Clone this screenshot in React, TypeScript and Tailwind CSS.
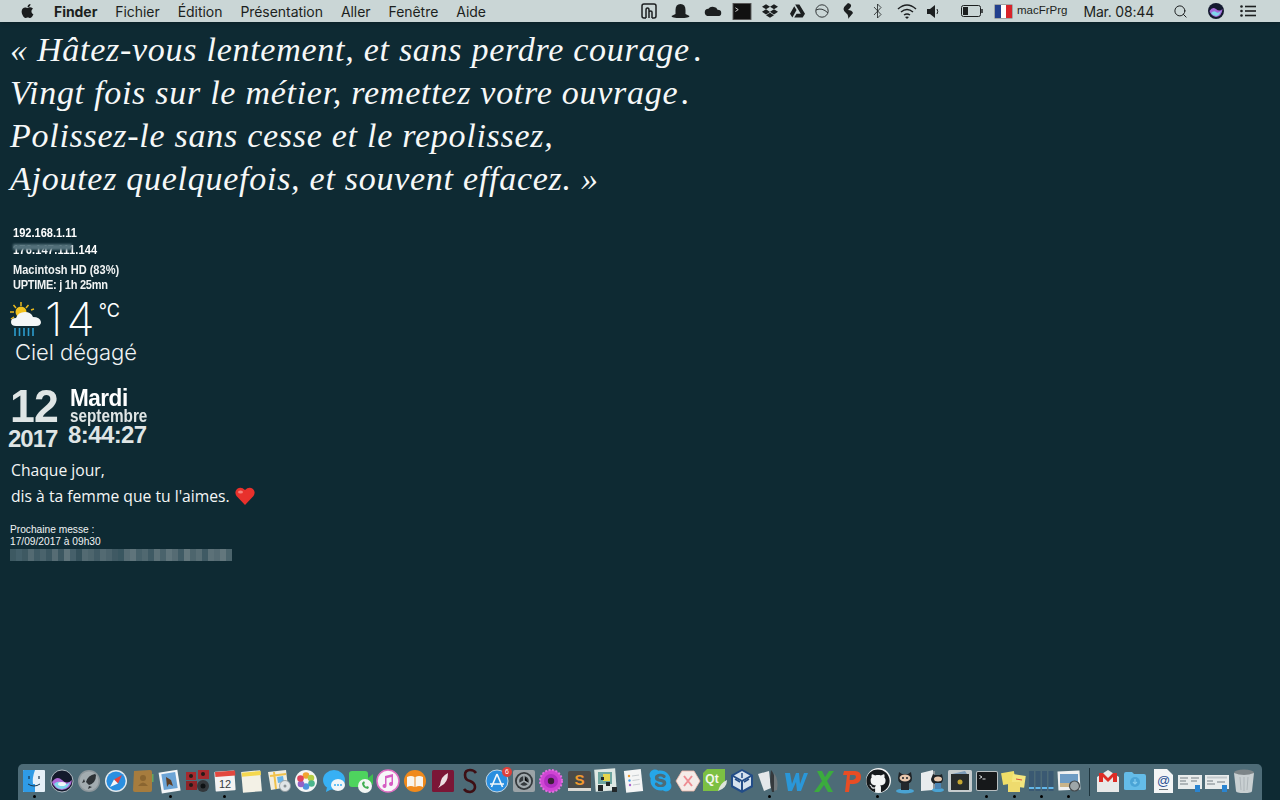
import type { ReactNode } from "react";
import { FaApple, FaDropbox, FaGithub, FaSkype } from "react-icons/fa";
import { Search } from "lucide-react";

const sans = "font-['Liberation_Sans',sans-serif]";

function Box({ children }: { children: ReactNode }) {
  return (
    <svg viewBox="0 0 26 26" className="h-[26px] w-[26px]">
      {children}
    </svg>
  );
}

const dockIcons: { name: string; dot?: boolean; icon: ReactNode }[] = [
  { name: "Finder", dot: true, icon: <Box><rect x="2" y="2" width="22" height="22" rx="1" fill="#e6f0f8" /><path d="M2 3a1 1 0 0 1 1-1h11q-3 8-2 14h2v8H3a1 1 0 0 1-1-1z" fill="#2f9be6" /><path d="M7 16q6 4 12 0" fill="none" stroke="#17344c" strokeWidth="1" /><path d="M8 8v3M18 8v3" stroke="#17344c" strokeWidth="1.2" /></Box> },
  { name: "Siri", icon: <Box><circle cx="13" cy="13" r="11" fill="#141a2c" stroke="#cfd8de" strokeWidth=".8" /><path d="M3 14q5-7 10-2t10 0q-1 9-10 10-8-1-10-8z" fill="#b06ad8" /><path d="M5 16q4-4 8-1t8-1q-2 7-8 7-6 0-8-5z" fill="#7fd6ec" /><ellipse cx="13" cy="16" rx="4" ry="2" fill="#f2f6fa" /></Box> },
  { name: "Launchpad", icon: <Box><circle cx="13" cy="13" r="11" fill="#8e979c" /><circle cx="13" cy="13" r="9.5" fill="#a3acb0" /><path d="M19 6q-7 1-9 8l3 3q7-2 7-10zM9 14l-3 1 2-4zM13 18l-1 3 4-2z" fill="#2d3236" /></Box> },
  { name: "Safari", icon: <Box><circle cx="13" cy="13" r="11" fill="#e4eaee" /><circle cx="13" cy="13" r="9.6" fill="#2a8fe0" /><path d="M19 7l-8 4.5 4 4z" fill="#e8413a" /><path d="M7 19l4-7.5 4 4z" fill="#f4f6f8" /></Box> },
  { name: "Contacts", icon: <Box><path d="M4 3l16-1q2 0 2 2v18q0 2-2 2l-15 0q-2 0-2-2z" fill="#a67c3e" /><path d="M22 6h1.5v4H22zM22 10h1.5v4H22z" fill="#64a860" /><circle cx="13" cy="10" r="3" fill="#8a6530" /><path d="M8 18q5-7 10 0z" fill="#8a6530" /></Box> },
  { name: "Preview", dot: true, icon: <Box><rect x="3" y="3" width="19" height="21" fill="#f4f6f8" transform="rotate(-9 13 13)" /><rect x="5.5" y="5" width="14" height="16" fill="#6ca4d6" transform="rotate(-9 13 13)" /><path d="M9 9l5 3 2 6-4-2-2 3z" fill="#5d3e26" /></Box> },
  { name: "Photo Booth", icon: <Box><rect x="1" y="4" width="10" height="8" fill="#a52a2e" /><rect x="13" y="2" width="11" height="9" fill="#a52a2e" /><rect x="1" y="13" width="11" height="9" fill="#8f2428" /><circle cx="6" cy="8" r="2" fill="#241a18" /><circle cx="18" cy="6" r="2" fill="#241a18" /><circle cx="6" cy="17" r="2" fill="#241a18" /><circle cx="18" cy="18" r="6" fill="#33383c" /><circle cx="18" cy="18" r="2.5" fill="#0e1214" /></Box> },
  { name: "Calendar", dot: true, icon: <Box><rect x="3" y="3" width="20" height="20" rx="1" fill="#f3f3f3" transform="rotate(-4 13 13)" /><path d="M3 4l20-1.5.4 5-20 1.4z" fill="#e2483f" /><text x="13" y="20" textAnchor="middle" fontSize="11" fill="#33393d" fontFamily="Liberation Sans">12</text></Box> },
  { name: "Notes", icon: <Box><rect x="3" y="3" width="19" height="21" fill="#f3f1e6" transform="rotate(-5 13 13)" /><path d="M2.7 4.7L21.6 3l.4 4-18.900 1.700z" fill="#f5d84f" /></Box> },
  { name: "Maps", icon: <Box><path d="M2 4l18-2 2 17-17 3z" fill="#f1ede0" /><path d="M4 8l16-2M8 4l2 17" stroke="#f1c24c" strokeWidth="2" /><path d="M11 9l6-1 1 6-6 1z" fill="#6ab4e8" /><circle cx="19" cy="18" r="5.500" fill="#dfe4e6" stroke="#8d9599" strokeWidth=".8" /><circle cx="19" cy="18" r="1.500" fill="#8d9599" /></Box> },
  { name: "Photos", icon: <Box><circle cx="13" cy="13" r="11" fill="#f5f6f6" /><circle cx="13" cy="7.500" r="3.300" fill="#f2a431" /><circle cx="18" cy="10" r="3.300" fill="#b4cf44" /><circle cx="18.500" cy="15.500" r="3.300" fill="#4bb58d" /><circle cx="13" cy="18.500" r="3.300" fill="#4d94dc" /><circle cx="8" cy="16" r="3.300" fill="#9262c6" /><circle cx="7.500" cy="10.500" r="3.300" fill="#e2445c" /></Box> },
  { name: "Messages", icon: <Box><ellipse cx="13" cy="12" rx="11" ry="10" fill="#37b0f4" /><path d="M6 19l-1 5 6-3z" fill="#37b0f4" /><ellipse cx="17" cy="17" rx="7" ry="6" fill="#f2f6f8" /><circle cx="14" cy="17" r="1" fill="#37b0f4" /><circle cx="17" cy="17" r="1" fill="#37b0f4" /><circle cx="20" cy="17" r="1" fill="#37b0f4" /></Box> },
  { name: "FaceTime", icon: <Box><rect x="1" y="3" width="19" height="16" rx="3" fill="#4ed45e" /><path d="M20 10l5-4v11l-5-4z" fill="#3fbe50" /><circle cx="17" cy="18" r="7" fill="#f2f6f4" /><path d="M14 15q0 5 6 6l1-2-2-1-1 1q-1-1-2-3l1-1-1-2z" fill="#3fae50" /></Box> },
  { name: "iTunes", icon: <Box><circle cx="13" cy="13" r="11" fill="#f6f6f8" /><circle cx="13" cy="13" r="11" fill="none" stroke="#e26fc4" strokeWidth="1.500" /><path d="M10 8l8-2v10a2 2 0 1 1-1.500-2V9l-5 1.300V18a2 2 0 1 1-1.500-2z" fill="#d55cc2" /></Box> },
  { name: "iBooks", icon: <Box><circle cx="13" cy="13" r="11" fill="#f08a1c" /><path d="M5 9q4-2 7.500 0v10Q9 17 5 19zM21 9q-4-2-7.500 0v10q3.500-2 7.500 0z" fill="#f8f5ee" /></Box> },
  { name: "Scrivener", icon: <Box><rect x="2" y="2" width="22" height="22" rx="1.500" fill="#7b1636" /><path d="M18 5q-7 3-8 12l-2 3 3-2q7-3 7-13z" fill="#ecdfe2" /></Box> },
  { name: "S", icon: <Box><path d="M19 5q-2-3-6-3-5 0-5 5t5 6q5 2 5 6t-5 5q-4 0-6-3" fill="none" stroke="#3d0f14" strokeWidth="2.600" /></Box> },
  { name: "App Store", icon: <Box><circle cx="13" cy="13" r="11" fill="#2a8fe0" stroke="#e4eaee" strokeWidth=".8" /><path d="M13 6l-5.500 13M13 6l5.500 13M6 16h14" stroke="#f2f7fa" strokeWidth="1.600" fill="none" /></Box> },
  { name: "Préférences", icon: <Box><rect x="2" y="2" width="22" height="22" rx="2" fill="#9ba3a7" /><circle cx="13" cy="13" r="9" fill="#34393c" /><circle cx="13" cy="13" r="6" fill="none" stroke="#a1a9ad" strokeWidth="2.400" /><path d="M13 7v6l5 3M13 13l-5 3" stroke="#a1a9ad" strokeWidth="1.500" /></Box> },
  { name: "Daisy", icon: <Box><circle cx="13" cy="13" r="11" fill="#cf45d4" strokeDasharray="2 1.500" stroke="#e26ee0" strokeWidth="2" /><circle cx="13" cy="13" r="7" fill="#b22ec2" /><circle cx="13" cy="13" r="3.200" fill="#3c2038" /></Box> },
  { name: "Sublime", icon: <Box><rect x="2" y="3" width="23" height="20" rx="2" fill="#4a4a48" /><rect x="2" y="20" width="23" height="3" fill="#d8d8d4" /><text x="13.500" y="17" textAnchor="middle" fontSize="15" fontWeight="700" fill="#f09a2e" fontFamily="Liberation Sans">S</text></Box> },
  { name: "QR", icon: <Box><rect x="2" y="1" width="21" height="22" fill="#dfe8e4" transform="rotate(-4 13 13)" /><rect x="5" y="4" width="14" height="12" fill="#6ea6a0" /><rect x="10" y="6" width="7" height="7" fill="#e6d54c" /><path d="M5 17h5v6H5zM13 14h4v4h-4zM19 19h5v5h-5zM8 9h3v3H8z" fill="#22282a" /></Box> },
  { name: "Rappels", icon: <Box><rect x="5" y="2" width="17" height="22" fill="#f4f5f5" transform="rotate(-6 13 13)" /><circle cx="9" cy="8" r="1.200" fill="#f09a2e" /><circle cx="9.500" cy="12.500" r="1.200" fill="#4da4e6" /><circle cx="10" cy="17" r="1.200" fill="#a864cc" /><path d="M12 8l7-1M12.500 12.500l7-1M13 17l7-1" stroke="#bcc4c8" strokeWidth=".8" /></Box> },
  { name: "Skype", icon: <FaSkype className="h-[25px] w-[25px] text-[#25a6e8]" /> },
  { name: "Xamarin", icon: <Box><path d="M7 3h12l6 10-6 10H7L1 13z" fill="#f5ece8" stroke="#f0b8a8" strokeWidth=".8" /><path d="M9 8l8 10M17 8L9 18" stroke="#ee8d92" strokeWidth="2" /></Box> },
  { name: "Qt", icon: <Box><path d="M5 1h18v14l-7 8H1V5z" fill="#7cc043" /><text x="10" y="15" textAnchor="middle" fontSize="12" fontWeight="700" fill="#f2f7ec" fontFamily="Liberation Sans">Qt</text><path d="M16 23q2-8 9-11 0 8-9 11z" fill="#dfe4dc" /></Box> },
  { name: "VirtualBox", icon: <Box><path d="M13 1l11 6v12l-11 6-11-6V7z" fill="#234d88" /><path d="M13 3l8 4.500-8 4.500-8-4.500zM4 9l8 4.500V22l-8-4.500zM22 9l-8 4.500V22l8-4.500z" fill="#d6e2ee" /><path d="M13 5v5M6 11l5 3M20 11l-5 3" stroke="#234d88" strokeWidth="1.500" /></Box> },
  { name: "Plume", dot: true, icon: <Box><path d="M2 6l11-3 2 17-7 3z" fill="#e4e8ea" /><path d="M15 2q4 4 4 13l-1 9h-2q-3-10-1-22z" fill="#34393c" /><path d="M18 5q5 7 3 17l-3 1z" fill="#6f777a" /></Box> },
  { name: "W", icon: <Box><path d="M2 5h5l2 11 4-11h3l1 11 4-11h4l-7 18h-4l-1-9-4 9H5z" fill="#2a97d8" /></Box> },
  { name: "X", icon: <Box><path d="M6 3h5l3 6 4-6h5l-7 10 6 11h-5l-4-7-5 7H3l8-11z" fill="#3bab3e" /></Box> },
  { name: "P", icon: <Box><path d="M7 24l2-17H5l1-4h11q6 0 6 6t-7 7h-4l-1 8z" fill="#e84d24" /><path d="M12 7h4q2 0 2 2t-3 3h-3.500z" fill="#4d6c78" /></Box> },
  { name: "GitHub", dot: true, icon: <span className="flex h-[25px] w-[25px] items-center justify-center rounded-full bg-[#f2f4f4]"><FaGithub className="h-[24px] w-[24px] text-[#15191c]" /></span> },
  { name: "Octocat", icon: <Box><ellipse cx="13" cy="23" rx="9" ry="2.500" fill="#4aa4d4" /><path d="M7 4l3 2h6l3-2 1 6q0 6-7 6t-7-6z" fill="#1d2226" /><ellipse cx="13" cy="10" rx="5.500" ry="3.500" fill="#e8c8ae" /><circle cx="11" cy="10" r="1" fill="#1d2226" /><circle cx="15" cy="10" r="1" fill="#1d2226" /><rect x="9" y="15" width="8" height="7" fill="#23282c" /></Box> },
  { name: "GitHub Desktop", icon: <Box><path d="M1 5l12-3v20L1 23z" fill="#e8ecee" /><rect x="13" y="3" width="2" height="19" fill="#8d9599" /><ellipse cx="18" cy="22" rx="6" ry="2" fill="#4aa4d4" /><path d="M13 6l2 1h5l2-1 1 5q0 5-6 5t-6-5z" fill="#1d2226" /><ellipse cx="18" cy="11" rx="4" ry="2.500" fill="#e8c8ae" /><rect x="15" y="15" width="6" height="6" fill="#4a84b4" /></Box> },
  { name: "Coffre", icon: <Box><rect x="1" y="2" width="24" height="22" rx="1.500" fill="#c6ccce" /><rect x="4" y="6" width="18" height="16" fill="#272b2c" /><path d="M5 6l13-3 2 3z" fill="#7b9ab8" /><circle cx="13" cy="14" r="2.500" fill="#c8a832" /></Box> },
  { name: "Terminal", dot: true, icon: <Box><rect x="2" y="3" width="22" height="20" rx="2" fill="#b9bfc1" /><rect x="3" y="4" width="20" height="18" rx="1" fill="#16181a" /><path d="M5.500 7.500l2.500 1.500-2.500 1.500M8.500 11h3" stroke="#eef1f2" strokeWidth=".9" fill="none" /></Box> },
  { name: "Stickies", dot: true, icon: <Box><rect x="1" y="4" width="13" height="12" fill="#f0de68" transform="rotate(-10 8 10)" /><rect x="11" y="7" width="13" height="12" fill="#f4e67e" transform="rotate(8 18 13)" /><rect x="7" y="14" width="12" height="10" fill="#eedb6e" /><path d="M15 11l6 1" stroke="#dd4b3c" strokeWidth="1" /></Box> },
  { name: "Barres", dot: true, icon: <Box><g fill="#3a5972"><rect x="1" y="3" width="5" height="20" /><rect x="7.500" y="3" width="5" height="20" /><rect x="14" y="3" width="5" height="20" /><rect x="20.500" y="3" width="5" height="20" /></g><g fill="#62b6e8"><rect x="1" y="19" width="5" height="2" /><rect x="7.500" y="19" width="5" height="2" /><rect x="14" y="19" width="5" height="2" /><rect x="20.500" y="19" width="5" height="2" /></g></Box> },
  { name: "Aperçu", dot: true, icon: <Box><rect x="2" y="3" width="22" height="19" fill="#eef0f0" transform="rotate(-3 13 13)" /><rect x="4" y="6" width="18" height="9" fill="#6d9cc4" /><path d="M4 15h18v4H4z" fill="#c8b48a" /><circle cx="18.500" cy="18" r="5" fill="#9ea6a8" stroke="#44494c" strokeWidth="1.200" /></Box> },
];

const stackIcons: { name: string; icon: ReactNode }[] = [
  { name: "Gmail", icon: <Box><path d="M2 9l11-7 11 7v15H2z" fill="#e8e9e9" /><path d="M4 5h4l5 5 5-5h4v9h-4V9l-5 5-5-5v5H4z" fill="#dd2c26" /></Box> },
  { name: "Téléchargements", icon: <Box><path d="M2 6q0-2 2-2h6l2 2h10q2 0 2 2v13q0 1-2 1H4q-2 0-2-1z" fill="#64bce8" /><circle cx="13" cy="14" r="5" fill="#4aa4d6" /><path d="M13 11v5M11 14l2 2 2-2" stroke="#84cdf0" strokeWidth="1.200" fill="none" /></Box> },
  { name: "Adresse", icon: <Box><path d="M4 1h13l6 6v18H4z" fill="#f3f5f6" /><text x="13.500" y="17" textAnchor="middle" fontSize="13" fill="#2b4f92" fontFamily="Liberation Sans">@</text><path d="M9 21.500h9" stroke="#6a7276" strokeWidth="1" /></Box> },
  { name: "Capture 1", icon: <Box><rect x="1" y="7" width="24" height="14" fill="#e8ecec" /><path d="M3 10h8M3 13h6M3 16h8M14 10h8M14 13h6" stroke="#9aa3a7" strokeWidth="1.300" /><rect x="18" y="17" width="5" height="7" fill="#2a84d0" /></Box> },
  { name: "Capture 2", icon: <Box><rect x="1" y="7" width="24" height="14" fill="#e8ecec" /><path d="M3 9.500h20" stroke="#c2c9cc" strokeWidth="2" /><path d="M3 13h6M3 16h8M13 14h8" stroke="#9aa3a7" strokeWidth="1.300" /><rect x="18" y="17" width="5" height="7" fill="#2a84d0" /></Box> },
  { name: "Corbeille", icon: <Box><ellipse cx="13" cy="4.500" rx="10" ry="3" fill="#7d8588" /><path d="M3 5l2 18q0 2 8 2t8-2l2-18q-10 4-20 0z" fill="#c9d0d2" /><path d="M9 9l1 13M13 9v14M17 9l-1 13" stroke="#a7afb2" strokeWidth=".8" /></Box> },
];

const censor = ["#3d5962","#44606a","#3e5962","#536a72","#405b65","#4a636c","#3c5761","#566c74","#3c5761","#5f747b","#46606a","#35515b","#536a72","#4d656d","#415b65","#536a72","#4b636c","#3f5963","#395660","#566c74","#5f747b","#47616a","#506870","#3f5a64","#5c7178","#4a636c","#60757c","#556b73","#405b65","#63777d","#4d656d","#586e75","#3f5a64","#5c7178","#556b73","#63777d","#4b646c"];

function DockSlot({ name, dot, children }: { name: string; dot?: boolean; children: ReactNode }) {
  return (
    <div title={name} className="relative flex w-[27.23px] shrink-0 justify-center pt-[4px]">
      {children}
      {dot && <span className="absolute left-[12px] top-[31px] h-[3px] w-[3px] rounded-full bg-black" />}
    </div>
  );
}

function MenuBar() {
  return (
    <header className={`flex h-[22px] shrink-0 items-center bg-[#cad6d6] text-[14px] text-[#1c1f20] shadow-[0_1px_4px_rgba(0,0,0,.25)] font-['Inter',sans-serif]`}>
      <FaApple className="ml-[20px] h-[16px] w-[15px] text-[#1a1c1d]" />
      <nav className="ml-[19px] flex gap-[18px] tracking-[-0.05px]">
        <span className="font-bold">Finder</span>
        <span>Fichier</span>
        <span>Édition</span>
        <span>Présentation</span>
        <span>Aller</span>
        <span>Fenêtre</span>
        <span>Aide</span>
      </nav>
      <div className="ml-auto flex items-center pr-[24px]">
        <svg viewBox="0 0 16 16" className="h-[16px] w-[16px]" fill="none" stroke="#1c1f20" strokeWidth="1.500"><path d="M5 15H3q-2 0-2-2V3q0-2 2-2h10q2 0 2 2v10q0 2-2 2h-2" /><path d="M5 15V7q0-2 1.500-2T8 7v8M8 9q0-1 1.500-1T11 9v6" /></svg>
        <svg viewBox="0 0 19 14" className="ml-[14px] h-[14px] w-[19px]" fill="#1c1f20"><path d="M9.500 0q5 0 5 6v4l4 2q0 2-9 2t-9-2l4-2V6q0-6 5-6z" /></svg>
        <svg viewBox="0 0 18 12" className="ml-[14px] h-[11px] w-[18px]" fill="#1c1f20"><path d="M5 11q-5 0-5-4t4-4q2-3 6-2 3 0 4 3 4 0 4 3.500T14 11z" /></svg>
        <svg viewBox="0 0 20 18" className="ml-[10px] h-[17px] w-[20px]"><rect x=".5" y=".5" width="19" height="17" fill="#111" stroke="#555" /><path d="M3 5l3 2-3 2" stroke="#fff" fill="none" strokeWidth=".8" /></svg>
        <FaDropbox className="ml-[10px] h-[16px] w-[16px] text-[#1c1f20]" />
        <svg viewBox="0 0 16 15" className="ml-[12px] h-[15px] w-[15px]" fill="#1c1f20"><path d="M5.500 0h4.500l6 10H11.500zM4.500 2L7 6 2.500 14 0 10zM4.500 14l2.500-4h9l-2.500 4z" /></svg>
        <svg viewBox="0 0 14 14" className="ml-[10px] h-[14px] w-[14px]" fill="none" stroke="#33383a" strokeWidth="1"><circle cx="7" cy="7" r="6.200" /><path d="M1 6q6-3 12 3" /></svg>
        <svg viewBox="0 0 10 16" className="ml-[14px] h-[16px] w-[10px]" fill="#1c1f20"><path d="M5 0q5 1 2 5L5 7q4 0 5 3l-5 6q1-4-2-6-5-4 0-8z" /></svg>
        <svg viewBox="0 0 9 16" className="ml-[20px] h-[16px] w-[9px]" fill="none" stroke="#1c1f20" strokeWidth=".8"><path d="M1 4l7 7.500L4.500 15V1L8 4.500 1 12" /></svg>
        <svg viewBox="0 0 20 15" className="ml-[15px] h-[15px] w-[20px]" fill="none" stroke="#1c1f20" strokeWidth="1.500"><path d="M1 5q9-8 18 0M4 8q6-5 12 0M7 11q3-2 6 0" /><path d="M10 15l-2-2q2-1 4 0z" fill="#1c1f20" stroke="none" /></svg>
        <svg viewBox="0 0 12 13" className="ml-[10px] h-[13px] w-[12px]" fill="#1c1f20"><path d="M0 4h3l5-4v13l-5-4H0z" /><path d="M10 4q1.500 2.500 0 5" stroke="#1c1f20" fill="none" /></svg>
        <svg viewBox="0 0 22 12" className="ml-[22px] h-[12px] w-[22px]" fill="none" stroke="#1c1f20"><rect x=".5" y=".5" width="19" height="11" rx="2" /><rect x="2" y="2" width="5" height="8" fill="#1c1f20" stroke="none" /><path d="M21 4v4" strokeWidth="1.500" /></svg>
        <span className="ml-[12px] flex h-[13px] w-[17px] shadow-[0_0_0_.5px_#777]">
          <span className="w-1/3 bg-[#23408e]" />
          <span className="w-1/3 bg-white" />
          <span className="w-1/3 bg-[#d8232a]" />
        </span>
        <span className={`ml-[5px] text-[11.5px] ${sans}`}>macFrPrg</span>
        <span className="ml-[16px] text-[14px] tracking-[-0.2px]">Mar. 08:44</span>
        <Search className="ml-[19px] h-[15px] w-[15px]" strokeWidth={1.6} />
        <svg viewBox="0 0 16 16" className="ml-[20px] h-[16px] w-[16px]"><circle cx="8" cy="8" r="8" fill="#141a30" /><path d="M1.500 8q3-5 6.500-2t6.500 0Q14 13 8 14q-5-1-6.500-6z" fill="#a46ad8" /><path d="M3 10q3-3 5-1t5-1q-2 5-5 5-3 0-5-3z" fill="#7fd6ec" /></svg>
        <svg viewBox="0 0 16 12" className="ml-[16px] h-[12px] w-[16px]" fill="#1c1f20"><circle cx="1.500" cy="1.500" r="1.300" /><circle cx="1.500" cy="6" r="1.300" /><circle cx="1.500" cy="10.500" r="1.300" /><rect x="5" y=".7" width="11" height="1.600" /><rect x="5" y="5.200" width="11" height="1.600" /><rect x="5" y="9.700" width="11" height="1.600" /></svg>
      </div>
    </header>
  );
}

function WeatherIcon() {
  return (
    <svg viewBox="0 0 32 34" className="h-[34px] w-[32px] shrink-0">
      <g stroke="#e9b81e" strokeWidth="1.500">
        <path d="M11 0v4M3.500 3l2.500 3M18.500 3l-2.500 3M0 10h4M1 17l3-2M21 8l3-1" />
      </g>
      <circle cx="11" cy="10" r="5.500" fill="#f2c21e" />
      <path d="M6 24q-5 0-5-4t5-4q2-6 9-6 6 0 8 5 7 0 8 5 0 4-5 4z" fill="#f4f7f7" />
      <path d="M5 26v8M9.500 26v8M14 26v8M18.500 26v8M23 26v8" stroke="#2c9ccc" strokeWidth="1.600" />
    </svg>
  );
}

export default function App() {
  return (
    <div className="flex h-screen flex-col overflow-hidden bg-[#0e2a33] text-white">
      <MenuBar />
      <main className="flex-1 pl-[10px]">
        <div className="mt-[6px] font-['Liberation_Serif',serif] text-[34px] leading-[43px] tracking-[0.73px] text-[#f6f8f8] italic">
          <p>« Hâtez-vous lentement, et sans perdre courage<span className="ml-[4px]">.</span></p>
          <p>Vingt fois sur le métier, remettez votre ouvrage<span className="ml-[3px]">.</span></p>
          <p>Polissez-le sans cesse et le repolissez,</p>
          <p>Ajoutez quelquefois, et souvent effacez. »</p>
        </div>

        <div className={`mt-[25px] ml-[3px] w-[140px] origin-left scale-x-[.92] text-[12px] leading-[17px] font-bold ${sans}`}>
          <p>192.168.1.11</p>
          <p className="relative tracking-[0.2px]">
            176.147.111.144
            <span className="absolute top-[2px] left-0 h-[6px] w-[64px] bg-[#53707a] blur-[1px]" />
          </p>
          <p className="mt-[4px] leading-[15px] text-[#f0f3f3]">Macintosh HD (83%)</p>
          <p className="leading-[15px] tracking-[-0.3px] text-[#f0f3f3]">UPTIME: j 1h 25mn</p>
        </div>

        <div className="mt-[9px] flex h-[34px] items-start font-['Inter',sans-serif] font-extralight">
          <WeatherIcon />
          <span className="ml-[3px] text-[46px] leading-[34px] tracking-[4px]">14</span>
          <span className="text-[18px] leading-[18px] font-normal">°C</span>
        </div>
        <p className="mt-[1px] ml-[5px] font-['Inter',sans-serif] text-[22px] leading-[30px] font-light tracking-[-0.05px] text-[#f0f3f3]">Ciel dégagé</p>

        <div className={`mt-[17px] flex font-bold ${sans}`}>
          <div className="w-[60px] shrink-0 text-[#dfe5e5]">
            <p className="origin-left scale-x-[.95] text-[47px] leading-[44px] tracking-[-1px]">12</p>
            <p className="-ml-[2px] text-[24px] leading-[21px] tracking-[-1px]">2017</p>
          </div>
          <div className="min-w-0 pt-[4px]">
            <p className="origin-left scale-x-[.98] text-[23px] leading-[20px] tracking-[-0.5px]">Mardi</p>
            <p className="origin-left scale-x-[.85] text-[18px] leading-[17px] text-[#dfe5e5]">septembre</p>
            <p className="-ml-[2px] -mt-px text-[24px] leading-[22px] tracking-[-0.6px] whitespace-nowrap text-[#dfe5e5]">8:44:27</p>
          </div>
        </div>

        <div className="mt-[8px] ml-px font-['Open_Sans',sans-serif] text-[15.7px] leading-[26px] text-[#f4f6f6]">
          <p>Chaque jour,</p>
          <p className="flex items-center">
            dis à ta femme que tu l'aimes.
            <svg viewBox="0 0 20 18" className="ml-[5px] h-[18px] w-[20px]"><path d="M10 18L1.500 9Q-1 5 2 2q4-3 8 1 4-4 8-1 3 3 .5 7z" fill="#e8312c" /><ellipse cx="5.500" cy="5" rx="2.500" ry="1.500" fill="#f6817c" /></svg>
          </p>
        </div>

        <div className={`mt-[15px] text-[10.2px] leading-[12px] text-[#f0f3f3] ${sans}`}>
          <p>Prochaine messe :</p>
          <p>17/09/2017 à 09h30</p>
          <div className="mt-[1px] flex w-[222px]">
            {censor.map((c, i) => (
              <span key={i} className="h-[12px] w-[6px]" style={{ backgroundColor: c }} />
            ))}
          </div>
        </div>
      </main>

      <footer className="mx-[18px] flex h-[36px] shrink-0 rounded-t-[5px] bg-[#4d6b77] pl-[2.700px]">
        {dockIcons.map((d) => (
          <DockSlot key={d.name} name={d.name} dot={d.dot}>
            {d.name === "App Store" ? (
              <span className="relative">
                {d.icon}
                <span className={`absolute -top-[1px] right-[-2px] flex h-[10px] w-[10px] items-center justify-center rounded-full bg-[#e0403a] text-[7px] text-white ${sans}`}>6</span>
              </span>
            ) : (
              d.icon
            )}
          </DockSlot>
        ))}
        <div className="mt-[4px] mr-[5px] ml-[6.400px] h-[28px] w-px bg-[#1d343d]" />
        {stackIcons.map((d) => (
          <DockSlot key={d.name} name={d.name}>
            {d.icon}
          </DockSlot>
        ))}
      </footer>
    </div>
  );
}
